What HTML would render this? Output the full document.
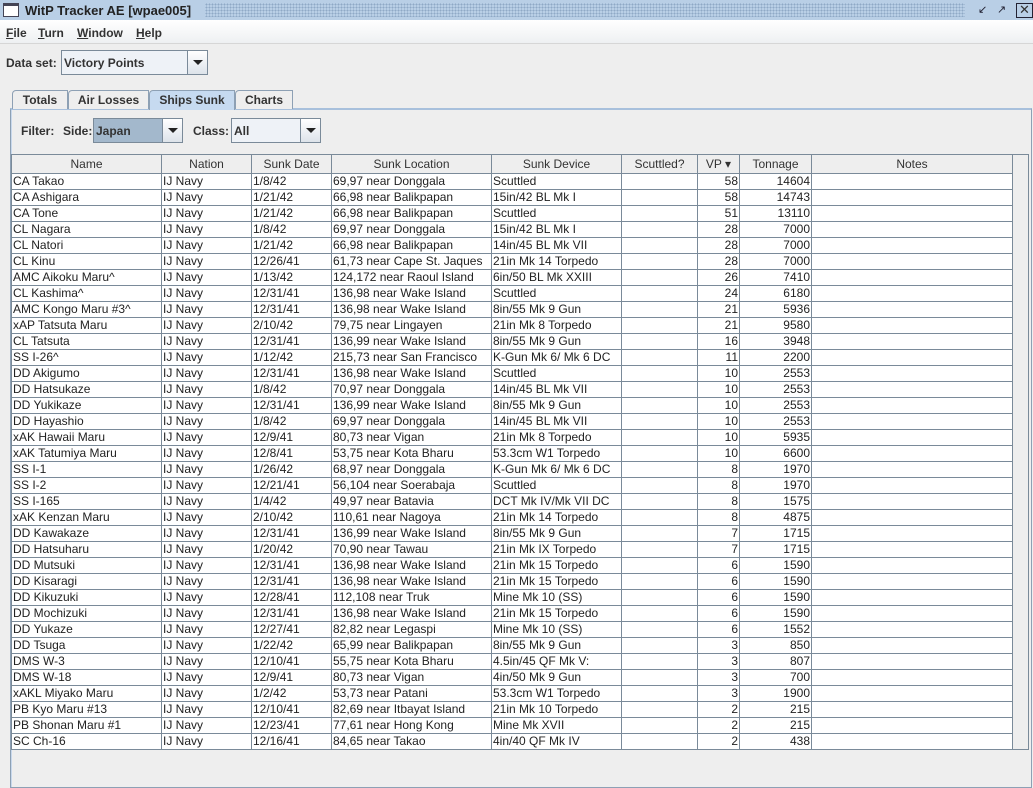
<!DOCTYPE html>
<html><head><meta charset="utf-8"><style>
*{margin:0;padding:0;box-sizing:border-box}
body{width:1033px;height:779px;background:#eeeeee;font-family:"Liberation Sans",sans-serif;font-size:12px;color:#333;position:relative;overflow:hidden}
.abs{position:absolute}
#title{left:0;top:0;width:1033px;height:20px;background:#b9cfe6}
#dots{left:205px;top:3px;width:760px;height:14px;background-image:radial-gradient(#8fa9c6 0.8px,transparent 0.9px);background-size:3px 3px}
#menu{left:0;top:20px;width:1033px;height:24px;background:linear-gradient(#fff,#eef0f2);border-bottom:1px solid #d6d6d6}
.mi{position:absolute;top:6px;font-size:12px;font-weight:bold;color:#333}
.combo{position:absolute;border:1px solid #7a8a99;background:#eef2f7}
.combo .t{position:absolute;left:2px;top:4px;font-weight:bold;color:#333}
.combo .b{position:absolute;right:0;top:0;width:20px;height:100%;border-left:1px solid #7a8a99;background:linear-gradient(#fff,#dde3ea)}
.combo .b:after{content:"";position:absolute;left:5px;top:9px;border-left:5px solid transparent;border-right:5px solid transparent;border-top:5px solid #222}
.lbl{position:absolute;font-weight:bold;color:#333}
.tab{position:absolute;top:90px;height:19px;border:1px solid #8da0b4;border-bottom:none;background:#eeeeee;font-weight:bold;text-align:center;padding-top:2px;border-radius:4px 0 0 0}
#panel{left:10px;top:108px;width:1022px;height:680px;border:1px solid #8da0b4;border-top:2px solid #a8c0dc;box-shadow:inset 1px 0 0 #c8d8ec}
table{position:absolute;left:11px;top:154px;border-collapse:collapse;table-layout:fixed;background:#fff}
td,th{border:1px solid #7a8a99;height:16px;line-height:14px;padding:0 1px;white-space:nowrap;overflow:hidden;font-weight:normal;color:#222}
td{padding-bottom:1px;line-height:13px}
th{background:#eeeeee;height:19px;color:#333}
td.r{text-align:right}
</style></head><body>
<div class="abs" id="title"></div>
<div class="abs" style="left:3px;top:3px;width:16px;height:14px;border:1px solid #445;background:#fff;border-top:3px solid #445"></div>
<div class="abs" style="left:25px;top:3px;font-size:13px;font-weight:bold;color:#222">WitP Tracker AE [wpae005]</div>
<div class="abs" id="dots"></div>
<div class="abs" style="left:978px;top:3px;width:14px;height:14px;font-size:11px;color:#223">&#8601;</div>
<div class="abs" style="left:997px;top:3px;width:14px;height:14px;font-size:11px;color:#223">&#8599;</div>
<div class="abs" style="left:1016px;top:3px;width:17px;height:15px;border:1px solid #223;font-size:13px;line-height:12px;text-align:center">✕</div>
<div class="abs" id="menu">
<span class="mi" style="left:6px"><u>F</u>ile</span>
<span class="mi" style="left:38px"><u>T</u>urn</span>
<span class="mi" style="left:77px"><u>W</u>indow</span>
<span class="mi" style="left:136px"><u>H</u>elp</span>
</div>
<div class="lbl" style="left:6px;top:56px">Data set:</div>
<div class="combo" style="left:61px;top:50px;width:147px;height:25px"><span class="t" style="top:5px">Victory Points</span><span class="b"></span></div>
<div class="abs" id="panel"></div>
<div class="tab" style="left:12px;width:56px">Totals</div>
<div class="tab" style="left:68px;width:81px">Air Losses</div>
<div class="tab" style="left:149px;width:86px;background:#c6daf0;height:20px">Ships Sunk</div>
<div class="tab" style="left:235px;width:58px">Charts</div>
<div class="lbl" style="left:21px;top:124px">Filter:</div>
<div class="lbl" style="left:63px;top:124px">Side:</div>
<div class="combo" style="left:93px;top:118px;width:90px;height:25px;background:#a3b8cc"><span class="t" style="top:5px">Japan</span><span class="b"></span></div>
<div class="lbl" style="left:193px;top:124px">Class:</div>
<div class="combo" style="left:231px;top:118px;width:90px;height:25px"><span class="t" style="top:5px">All</span><span class="b"></span></div>
<div class="abs" style="left:11px;top:154px;width:1018px;height:596px;border:1px solid #7a8a99;background:#eeeeee"></div>
<table>
<colgroup><col style="width:150px"><col style="width:90px"><col style="width:80px"><col style="width:160px"><col style="width:130px"><col style="width:76px"><col style="width:42px"><col style="width:72px"><col style="width:201px"></colgroup>
<tr><th>Name</th><th>Nation</th><th>Sunk Date</th><th>Sunk Location</th><th>Sunk Device</th><th>Scuttled?</th><th>VP &#9662;</th><th>Tonnage</th><th>Notes</th></tr>
<tr><td>CA Takao</td><td>IJ Navy</td><td>1/8/42</td><td>69,97 near Donggala</td><td>Scuttled</td><td></td><td class="r">58</td><td class="r">14604</td><td></td></tr>
<tr><td>CA Ashigara</td><td>IJ Navy</td><td>1/21/42</td><td>66,98 near Balikpapan</td><td>15in/42 BL Mk I</td><td></td><td class="r">58</td><td class="r">14743</td><td></td></tr>
<tr><td>CA Tone</td><td>IJ Navy</td><td>1/21/42</td><td>66,98 near Balikpapan</td><td>Scuttled</td><td></td><td class="r">51</td><td class="r">13110</td><td></td></tr>
<tr><td>CL Nagara</td><td>IJ Navy</td><td>1/8/42</td><td>69,97 near Donggala</td><td>15in/42 BL Mk I</td><td></td><td class="r">28</td><td class="r">7000</td><td></td></tr>
<tr><td>CL Natori</td><td>IJ Navy</td><td>1/21/42</td><td>66,98 near Balikpapan</td><td>14in/45 BL Mk VII</td><td></td><td class="r">28</td><td class="r">7000</td><td></td></tr>
<tr><td>CL Kinu</td><td>IJ Navy</td><td>12/26/41</td><td>61,73 near Cape St. Jaques</td><td>21in Mk 14 Torpedo</td><td></td><td class="r">28</td><td class="r">7000</td><td></td></tr>
<tr><td>AMC Aikoku Maru^</td><td>IJ Navy</td><td>1/13/42</td><td>124,172 near Raoul Island</td><td>6in/50 BL Mk XXIII</td><td></td><td class="r">26</td><td class="r">7410</td><td></td></tr>
<tr><td>CL Kashima^</td><td>IJ Navy</td><td>12/31/41</td><td>136,98 near Wake Island</td><td>Scuttled</td><td></td><td class="r">24</td><td class="r">6180</td><td></td></tr>
<tr><td>AMC Kongo Maru #3^</td><td>IJ Navy</td><td>12/31/41</td><td>136,98 near Wake Island</td><td>8in/55 Mk 9 Gun</td><td></td><td class="r">21</td><td class="r">5936</td><td></td></tr>
<tr><td>xAP Tatsuta Maru</td><td>IJ Navy</td><td>2/10/42</td><td>79,75 near Lingayen</td><td>21in Mk 8 Torpedo</td><td></td><td class="r">21</td><td class="r">9580</td><td></td></tr>
<tr><td>CL Tatsuta</td><td>IJ Navy</td><td>12/31/41</td><td>136,99 near Wake Island</td><td>8in/55 Mk 9 Gun</td><td></td><td class="r">16</td><td class="r">3948</td><td></td></tr>
<tr><td>SS I-26^</td><td>IJ Navy</td><td>1/12/42</td><td>215,73 near San Francisco</td><td>K-Gun Mk 6/ Mk 6 DC</td><td></td><td class="r">11</td><td class="r">2200</td><td></td></tr>
<tr><td>DD Akigumo</td><td>IJ Navy</td><td>12/31/41</td><td>136,98 near Wake Island</td><td>Scuttled</td><td></td><td class="r">10</td><td class="r">2553</td><td></td></tr>
<tr><td>DD Hatsukaze</td><td>IJ Navy</td><td>1/8/42</td><td>70,97 near Donggala</td><td>14in/45 BL Mk VII</td><td></td><td class="r">10</td><td class="r">2553</td><td></td></tr>
<tr><td>DD Yukikaze</td><td>IJ Navy</td><td>12/31/41</td><td>136,99 near Wake Island</td><td>8in/55 Mk 9 Gun</td><td></td><td class="r">10</td><td class="r">2553</td><td></td></tr>
<tr><td>DD Hayashio</td><td>IJ Navy</td><td>1/8/42</td><td>69,97 near Donggala</td><td>14in/45 BL Mk VII</td><td></td><td class="r">10</td><td class="r">2553</td><td></td></tr>
<tr><td>xAK Hawaii Maru</td><td>IJ Navy</td><td>12/9/41</td><td>80,73 near Vigan</td><td>21in Mk 8 Torpedo</td><td></td><td class="r">10</td><td class="r">5935</td><td></td></tr>
<tr><td>xAK Tatumiya Maru</td><td>IJ Navy</td><td>12/8/41</td><td>53,75 near Kota Bharu</td><td>53.3cm W1 Torpedo</td><td></td><td class="r">10</td><td class="r">6600</td><td></td></tr>
<tr><td>SS I-1</td><td>IJ Navy</td><td>1/26/42</td><td>68,97 near Donggala</td><td>K-Gun Mk 6/ Mk 6 DC</td><td></td><td class="r">8</td><td class="r">1970</td><td></td></tr>
<tr><td>SS I-2</td><td>IJ Navy</td><td>12/21/41</td><td>56,104 near Soerabaja</td><td>Scuttled</td><td></td><td class="r">8</td><td class="r">1970</td><td></td></tr>
<tr><td>SS I-165</td><td>IJ Navy</td><td>1/4/42</td><td>49,97 near Batavia</td><td>DCT Mk IV/Mk VII DC</td><td></td><td class="r">8</td><td class="r">1575</td><td></td></tr>
<tr><td>xAK Kenzan Maru</td><td>IJ Navy</td><td>2/10/42</td><td>110,61 near Nagoya</td><td>21in Mk 14 Torpedo</td><td></td><td class="r">8</td><td class="r">4875</td><td></td></tr>
<tr><td>DD Kawakaze</td><td>IJ Navy</td><td>12/31/41</td><td>136,99 near Wake Island</td><td>8in/55 Mk 9 Gun</td><td></td><td class="r">7</td><td class="r">1715</td><td></td></tr>
<tr><td>DD Hatsuharu</td><td>IJ Navy</td><td>1/20/42</td><td>70,90 near Tawau</td><td>21in Mk IX Torpedo</td><td></td><td class="r">7</td><td class="r">1715</td><td></td></tr>
<tr><td>DD Mutsuki</td><td>IJ Navy</td><td>12/31/41</td><td>136,98 near Wake Island</td><td>21in Mk 15 Torpedo</td><td></td><td class="r">6</td><td class="r">1590</td><td></td></tr>
<tr><td>DD Kisaragi</td><td>IJ Navy</td><td>12/31/41</td><td>136,98 near Wake Island</td><td>21in Mk 15 Torpedo</td><td></td><td class="r">6</td><td class="r">1590</td><td></td></tr>
<tr><td>DD Kikuzuki</td><td>IJ Navy</td><td>12/28/41</td><td>112,108 near Truk</td><td>Mine Mk 10 (SS)</td><td></td><td class="r">6</td><td class="r">1590</td><td></td></tr>
<tr><td>DD Mochizuki</td><td>IJ Navy</td><td>12/31/41</td><td>136,98 near Wake Island</td><td>21in Mk 15 Torpedo</td><td></td><td class="r">6</td><td class="r">1590</td><td></td></tr>
<tr><td>DD Yukaze</td><td>IJ Navy</td><td>12/27/41</td><td>82,82 near Legaspi</td><td>Mine Mk 10 (SS)</td><td></td><td class="r">6</td><td class="r">1552</td><td></td></tr>
<tr><td>DD Tsuga</td><td>IJ Navy</td><td>1/22/42</td><td>65,99 near Balikpapan</td><td>8in/55 Mk 9 Gun</td><td></td><td class="r">3</td><td class="r">850</td><td></td></tr>
<tr><td>DMS W-3</td><td>IJ Navy</td><td>12/10/41</td><td>55,75 near Kota Bharu</td><td>4.5in/45 QF Mk V:</td><td></td><td class="r">3</td><td class="r">807</td><td></td></tr>
<tr><td>DMS W-18</td><td>IJ Navy</td><td>12/9/41</td><td>80,73 near Vigan</td><td>4in/50 Mk 9 Gun</td><td></td><td class="r">3</td><td class="r">700</td><td></td></tr>
<tr><td>xAKL Miyako Maru</td><td>IJ Navy</td><td>1/2/42</td><td>53,73 near Patani</td><td>53.3cm W1 Torpedo</td><td></td><td class="r">3</td><td class="r">1900</td><td></td></tr>
<tr><td>PB Kyo Maru #13</td><td>IJ Navy</td><td>12/10/41</td><td>82,69 near Itbayat Island</td><td>21in Mk 10 Torpedo</td><td></td><td class="r">2</td><td class="r">215</td><td></td></tr>
<tr><td>PB Shonan Maru #1</td><td>IJ Navy</td><td>12/23/41</td><td>77,61 near Hong Kong</td><td>Mine Mk XVII</td><td></td><td class="r">2</td><td class="r">215</td><td></td></tr>
<tr><td>SC Ch-16</td><td>IJ Navy</td><td>12/16/41</td><td>84,65 near Takao</td><td>4in/40 QF Mk IV</td><td></td><td class="r">2</td><td class="r">438</td><td></td></tr>
</table>
</body></html>
